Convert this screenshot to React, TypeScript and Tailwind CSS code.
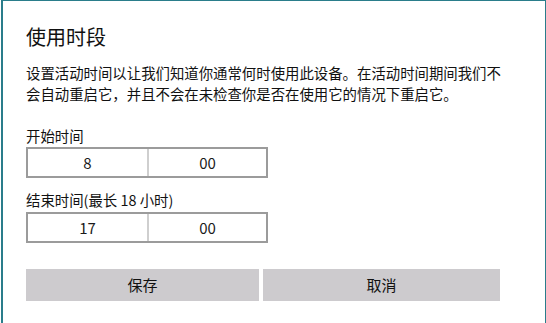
import React from "react";

const font = { fontFamily: '"Noto Sans CJK SC", "Noto Sans", sans-serif' };

function TimeBox({ h, m }: { h: string; m: string }) {
  return (
    <div className="flex w-[242px] h-[31px] border-2 border-[#9b9b9b] text-[15px] leading-[27px] text-[#1a1a1a]">
      <div className="w-[119px] text-center">{h}</div>
      <div className="w-[2px] bg-[#cfcfcf]" />
      <div className="flex-1 text-center">{m}</div>
    </div>
  );
}

export default function App() {
  return (
    <div
      className="w-[546px] h-[323px] bg-white border-t border-l-2 border-r-2 border-[#2a7d8b] ml-px pl-[23px] pt-[22px] text-[#111]"
      style={font}
    >
      <div className="text-[20px] leading-[28px]">使用时段</div>
      <p className="mt-[11px] w-[480px] text-[14.4px] leading-[21px]">
        设置活动时间以让我们知道你通常何时使用此设备。在活动时间期间我们不会自动重启它，并且不会在未检查你是否在使用它的情况下重启它。
      </p>
      <div className="mt-[21px] text-[14.4px] leading-[21px]">开始时间</div>
      <div className="mt-px">
        <TimeBox h="8" m="00" />
      </div>
      <div className="mt-[11px] text-[14.4px] leading-[21px]">结束时间(最长 18 小时)</div>
      <div className="mt-[2px]">
        <TimeBox h="17" m="00" />
      </div>
      <div className="mt-[26px] flex gap-[4px]">
        <div className="w-[233px] h-[32px] bg-[#cdcbce] text-center text-[15px] leading-[32px]">保存</div>
        <div className="w-[237px] h-[32px] bg-[#cdcbce] text-center text-[15px] leading-[32px]">取消</div>
      </div>
    </div>
  );
}
